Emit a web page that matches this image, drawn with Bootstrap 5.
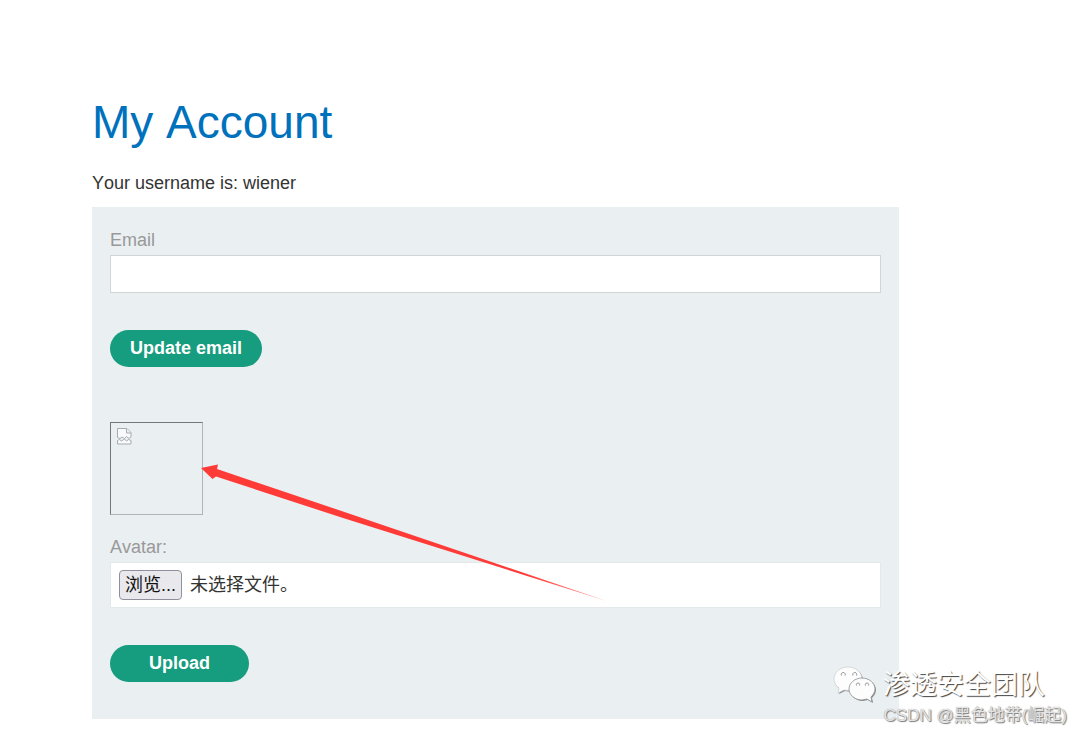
<!DOCTYPE html>
<html lang="en">
<head>
<meta charset="utf-8">
<meta name="viewport" content="width=device-width, initial-scale=1">
<title>My Account</title>
<link href="https://cdn.jsdelivr.net/npm/bootstrap@5.3.0/dist/css/bootstrap.min.css" rel="stylesheet">
<style>
  body { font-family: "Liberation Sans", "Noto Sans CJK SC", sans-serif; font-size: 18px; line-height: 24px; color: #333332; font-kerning: none; }
  .account { padding: 95px 181px 0 92px; }
  .account h1 { font-size: 46px; line-height: 54px; font-weight: 400; color: #0071bc; margin-bottom: 22px; }
  .account-panel { background: #eaeff2; padding: 21px 18px 37px; }
  .field-label { display: block; color: #999; }
  .field-box { background: #fff; border: 1px solid #d0d6d6; border-radius: 0; }
  .email-box { height: 38px; margin-top: 3px; margin-bottom: 37px; }
  .file-box { height: 46px; border-color: #e3e8ea; margin-top: 3px; margin-bottom: 37px; padding: 0 8px; }
  .pill { background: #169c7e; color: #fff; font-size: 18px; font-weight: 700; line-height: 22px; height: 37px; padding: 5px 18px 7px; border: 0; }
  .pill:hover { background: #12856b; color: #fff; }
  .pill-update { min-width: 152px; }
  .pill-upload { min-width: 139px; }
  .avatar { width: 93px; height: 93px; border: 1px solid #b1b4b7; border-top-color: #74777a; border-left-color: #74777a; margin: 55px 0 20px; padding: 5px 6px; }
  .browse { color: #111; background: #e9e9ed; border: 1px solid #8f8f9d; border-radius: 4px; height: 30px; line-height: 28px; padding: 0 5px; cursor: pointer; white-space: nowrap; }
  .pointer { left: 109px; top: 256px; pointer-events: none; }
  .watermark { right: 13px; bottom: 5px; color: #fcfcfc; text-align: right; }
  .team { font-size: 27px; line-height: 36px; color: #fff; text-shadow: 1px 1px 1px #444; margin-right: 22px; gap: 7px; }
  .blogger { font-size: 17px; line-height: 24px; color: #e4e4e4; text-shadow: 1px 1px 1px #777, 0 0 1px #999; white-space: nowrap; }
</style>
</head>
<body class="position-relative min-vh-100">
<main class="account">
  <h1>My Account</h1>
  <p class="mb-2 pb-1">Your username is: wiener</p>
  <div class="account-panel position-relative">
    <form>
      <label class="field-label" for="email">Email</label>
      <input class="form-control field-box email-box" id="email" type="email">
      <button class="btn pill pill-update rounded-pill" type="button">Update email</button>
    </form>
    <form>
      <div class="avatar d-flex align-items-start" role="img" aria-label="Avatar image unavailable">
        <svg width="16" height="17" viewBox="0 0 16 17" fill="none" stroke="#a9acae" stroke-width="1">
          <path d="M.5 9.500V.5h9.500l4 4V9l-2 1.500-2.500-2-2 2-2.500-1.500-2 1.500z" fill="#f8fafb"/>
          <path d="M9.500 .5v4.500h4.500" fill="#eaeff2"/>
          <path d="M.5 16v-3.500l2-1 2 1.500 3-2 2 2 2-1.500 2.500 1V16z" fill="#f8fafb"/>
        </svg>
      </div>
      <label class="field-label" for="avatar">Avatar:</label>
      <div class="field-box file-box d-flex align-items-center">
        <input class="visually-hidden" id="avatar" type="file">
        <label class="browse" for="avatar">浏览...</label>
        <span class="ms-1 ps-1 text-nowrap">未选择文件。</span>
      </div>
      <button class="btn pill pill-upload rounded-pill" type="button">Upload</button>
    </form>
    <svg class="pointer position-absolute" width="410" height="140" viewBox="0 0 410 140" aria-hidden="true">
      <defs><linearGradient id="tail"><stop offset=".8" stop-color="#ff3b38"/><stop offset="1" stop-color="#ff3b38" stop-opacity=".5"/></linearGradient></defs>
      <path fill="url(#tail)" d="M0 5L17 1.500L16 6L142 48.500L407 138.500L142 55L15 13.500L11.500 16z"/>
    </svg>
  </div>
</main>
<div class="watermark position-absolute">
  <div class="team d-flex align-items-center justify-content-end">
    <svg width="43" height="38" viewBox="0 0 43 38" aria-hidden="true">
      <g fill="#8a8d8f" transform="translate(1 1)">
        <path d="M15 1C7 1 1 6.500 1 13c0 4 2 7 5 9l-1 5 6-3c9 2 18-3 18-11C29 6.500 23 1 15 1z"/>
        <path d="M29 12c-7 0-13 5-13 11s6 11 13 11l5-1 5 3-1-5c2-2 4-5 4-8 0-6-6-11-13-11z"/>
      </g>
      <path fill="#fdfdfd" stroke="#c3c6c8" stroke-width=".6" d="M15 1C7 1 1 6.500 1 13c0 4 2 7 5 9l-1 5 6-3c9 2 18-3 18-11C29 6.500 23 1 15 1z"/>
      <path fill="#fdfdfd" stroke="#8d9092" stroke-width=".8" d="M29 12c-7 0-13 5-13 11s6 11 13 11l5-1 5 3-1-5c2-2 4-5 4-8 0-6-6-11-13-11z"/>
      <g fill="none" stroke="#8a8d8f" stroke-width="1"><path d="M8.500 9.500a2 2 0 1 1 3.500 0M20 9.500a2 2 0 1 1 3.500 0M23.500 19.500a1.700 1.700 0 1 1 3 0M32.500 19.500a1.700 1.700 0 1 1 3 0"/></g>
    </svg>
    <span>渗透安全团队</span>
  </div>
  <div class="blogger">CSDN @黑色地带(崛起)</div>
</div>
<script src="https://cdn.jsdelivr.net/npm/bootstrap@5.3.0/dist/js/bootstrap.bundle.min.js"></script>
</body>
</html>
